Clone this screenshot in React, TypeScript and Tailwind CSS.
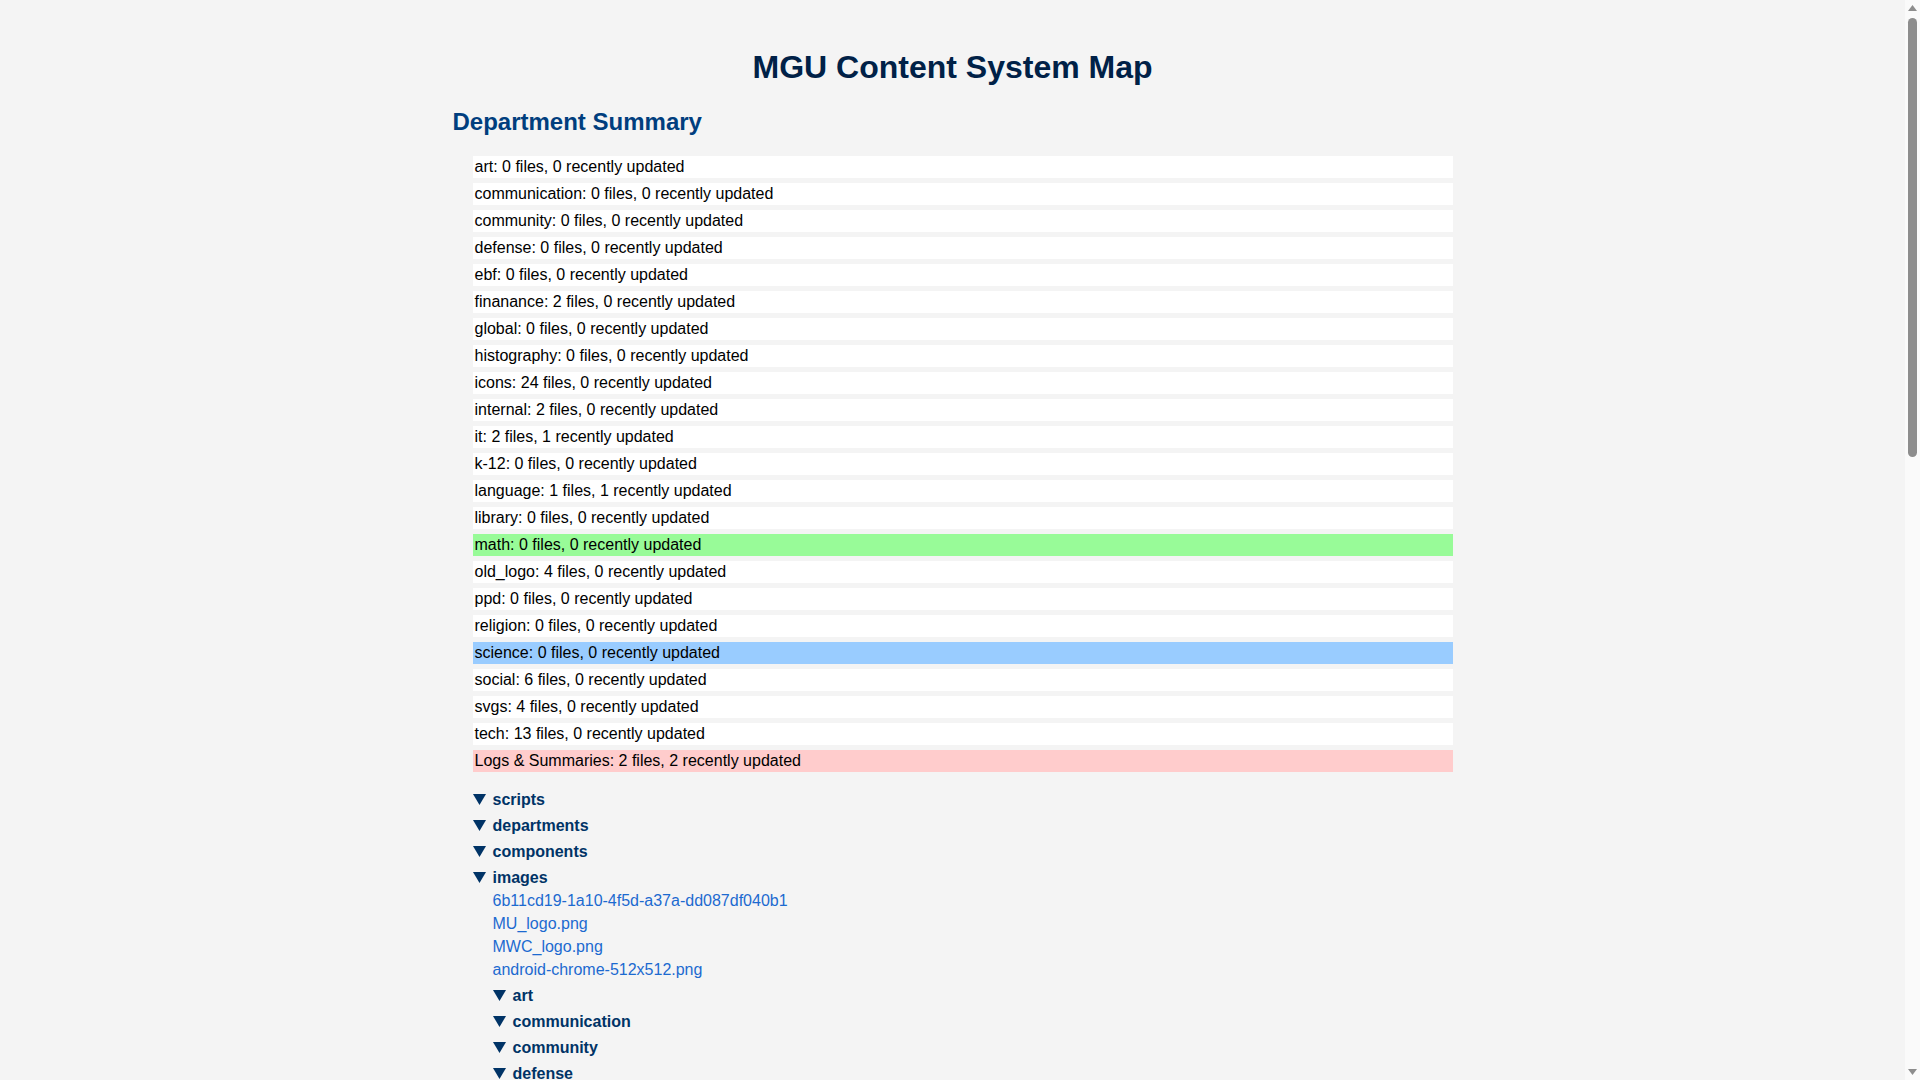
import { useState, type FC } from "react";

type Dept = { name: string; files: number; recent: number; tone?: string };

const departments: Dept[] = [
  { name: "art", files: 0, recent: 0 },
  { name: "communication", files: 0, recent: 0 },
  { name: "community", files: 0, recent: 0 },
  { name: "defense", files: 0, recent: 0 },
  { name: "ebf", files: 0, recent: 0 },
  { name: "finanance", files: 2, recent: 0 },
  { name: "global", files: 0, recent: 0 },
  { name: "histography", files: 0, recent: 0 },
  { name: "icons", files: 24, recent: 0 },
  { name: "internal", files: 2, recent: 0 },
  { name: "it", files: 2, recent: 1 },
  { name: "k-12", files: 0, recent: 0 },
  { name: "language", files: 1, recent: 1 },
  { name: "library", files: 0, recent: 0 },
  { name: "math", files: 0, recent: 0, tone: "bg-[#98fb98]" },
  { name: "old_logo", files: 4, recent: 0 },
  { name: "ppd", files: 0, recent: 0 },
  { name: "religion", files: 0, recent: 0 },
  { name: "science", files: 0, recent: 0, tone: "bg-[#99ccff]" },
  { name: "social", files: 6, recent: 0 },
  { name: "svgs", files: 4, recent: 0 },
  { name: "tech", files: 13, recent: 0 },
  { name: "Logs & Summaries", files: 2, recent: 2, tone: "bg-[#ffcccc]" },
];

type Node = { name: string; files?: string[]; children?: Node[] };

const iconFiles = [
  "about.svg", "arrow-left.svg", "arrow-right.svg", "book.svg", "calendar.svg",
  "chart.svg", "check.svg", "close.svg", "cloud.svg", "download.svg",
  "email.svg", "globe.svg", "home.svg", "info.svg", "lock.svg", "menu.svg",
  "phone.svg", "print.svg", "search.svg", "settings.svg", "share.svg",
  "star.svg", "upload.svg", "user.svg",
];

const tree: Node[] = [
  { name: "scripts" },
  { name: "departments" },
  { name: "components" },
  {
    name: "images",
    files: [
      "6b11cd19-1a10-4f5d-a37a-dd087df040b1",
      "MU_logo.png",
      "MWC_logo.png",
      "android-chrome-512x512.png",
    ],
    children: [
      { name: "art" },
      { name: "communication" },
      { name: "community" },
      { name: "defense" },
      { name: "ebf" },
      { name: "finanance", files: ["budget_2024.png", "finance_banner.jpg"] },
      { name: "global" },
      { name: "histography" },
      { name: "icons", files: iconFiles },
      { name: "internal", files: ["staff_photo.jpg", "org_chart.png"] },
      { name: "it", files: ["network_map.png", "helpdesk.png"] },
      { name: "k-12" },
      { name: "language", files: ["language_banner.png"] },
      { name: "library" },
      { name: "math" },
      {
        name: "old_logo",
        files: ["logo_2018.png", "logo_2019.png", "logo_dark.png", "logo_light.png"],
      },
      { name: "ppd" },
      { name: "religion" },
      { name: "science" },
      {
        name: "social",
        files: [
          "facebook.png", "instagram.png", "linkedin.png",
          "twitter.png", "youtube.png", "tiktok.png",
        ],
      },
      { name: "svgs", files: ["badge.svg", "crest.svg", "seal.svg", "wave.svg"] },
      { name: "tech" },
    ],
  },
];

const Folder: FC<{ node: Node }> = ({ node }) => {
  const [open, setOpen] = useState(true);
  return (
    <li>
      <button
        type="button"
        onClick={() => setOpen((prev) => !prev)}
        className="flex flex-row items-center pt-[3px] text-[16px] leading-[23px] font-bold text-[#003366]"
      >
        <svg
          width="13"
          height="11"
          viewBox="0 0 13 11"
          className={`mr-[7px] -mt-[1px] fill-current ${open ? "" : "-rotate-90"}`}
        >
          <polygon points="0,0 13,0 6.5,11" />
        </svg>
        {node.name}
      </button>
      {open && (node.files?.length || node.children?.length) ? (
        <ul className="pl-5">
          {node.files?.map((file) => (
            <li key={file} className="text-[16px] leading-[23px] text-[#1c6ad0]">
              <a href="#">{file}</a>
            </li>
          ))}
          {node.children?.map((child) => (
            <Folder key={child.name} node={child} />
          ))}
        </ul>
      ) : null}
    </li>
  );
};

// the reference shows the classic window scrollbar, so the page keeps its gutter
const Scrollbar: FC = () => (
  <div
    aria-hidden
    className="fixed top-0 right-0 bottom-0 flex w-[15px] flex-col items-center bg-[#fafafa]"
  >
    <svg width="9" height="6" viewBox="0 0 9 6" className="mt-[5px] fill-[#8d8d8d]">
      <polygon points="0,6 4.5,0 9,6" />
    </svg>
    <div className="mt-[7px] h-[439px] w-[9px] rounded-full bg-[#8d8d8d]" />
    <div className="flex-1" />
    <svg width="9" height="6" viewBox="0 0 9 6" className="mb-[5px] fill-[#8d8d8d]">
      <polygon points="0,0 9,0 4.5,6" />
    </svg>
  </div>
);

export default function App() {
  return (
    <div className="min-h-screen bg-[#f4f4f4] pr-[15px] font-['Liberation_Sans',Arial,sans-serif] text-black">
      <div className="mx-auto max-w-[1000px] pt-[49px] pb-10">
        <h1 className="text-center text-[32px] leading-[37px] font-bold text-[#002147]">
          MGU Content System Map
        </h1>
        <h2 className="mt-[22px] text-[24px] leading-[28px] font-bold text-[#003e7e]">
          Department Summary
        </h2>
        <ul className="mt-[20px] flex flex-col gap-[5px] pl-5">
          {departments.map((dept) => (
            <li
              key={dept.name}
              className={`h-[22px] px-[2px] py-[2px] text-[16px] leading-[18px] ${dept.tone ?? "bg-white"}`}
            >
              {dept.name}: {dept.files} files, {dept.recent} recently updated
            </li>
          ))}
        </ul>
        <ul className="mt-[13px] pl-5">
          {tree.map((node) => (
            <Folder key={node.name} node={node} />
          ))}
        </ul>
      </div>
      <Scrollbar />
    </div>
  );
}
